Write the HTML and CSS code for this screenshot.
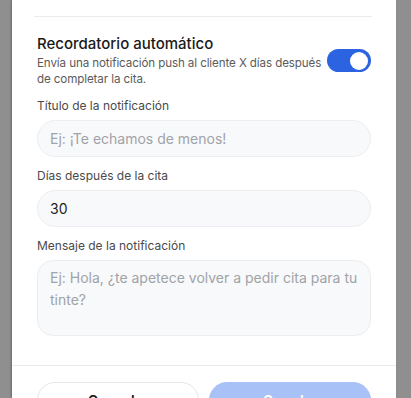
FILE: index.html
```html
<!DOCTYPE html>
<html lang="es">
<head>
<meta charset="utf-8">
<link rel="stylesheet" href="styles.css">
</head>
<body>
<div class="modal">
  <div class="body">
    <hr class="divider">
    <div class="toggle-row">
      <div class="toggle-text">
        <div class="toggle-title">Recordatorio automático</div>
        <div class="toggle-desc">Envía una notificación push al cliente X días después de completar la cita.</div>
      </div>
      <div class="switch"><span class="knob"></span></div>
    </div>
    <label class="field">
      <span class="label">Título de la notificación</span>
      <span class="input placeholder">Ej: ¡Te echamos de menos!</span>
    </label>
    <label class="field">
      <span class="label">Días después de la cita</span>
      <span class="input">30</span>
    </label>
    <label class="field">
      <span class="label">Mensaje de la notificación</span>
      <span class="input textarea placeholder">Ej: Hola, ¿te apetece volver a pedir cita para tu tinte?</span>
    </label>
  </div>
  <div class="footer">
    <button class="btn btn-cancel">Cancelar</button>
    <button class="btn btn-save">Guardar</button>
  </div>
</div>
</body>
</html>
```
FILE: styles.css
```css
html, body {
  margin: 0;
  padding: 0;
  height: 398px;
  overflow: hidden;
}
body {
  background: #8f8f8f;
  font-family: Inter, "Noto Sans", sans-serif;
  color: #1a1a1a;
}
.modal {
  margin-left: 12px;
  width: 384px;
  height: 398px;
  background: #fff;
  box-shadow: -1px 0 2px rgba(0,0,0,0.25);
  display: flex;
  flex-direction: column;
}
.body {
  padding: 16px 25px 0 25px;
  display: flex;
  flex-direction: column;
}
.divider {
  margin: 0 -1px 0 -3px;
  border: 0;
  height: 1px;
  background: #ebebeb;
}
.toggle-row {
  margin-top: 17px;
  display: flex;
  align-items: center;
  gap: 4px;
}
.toggle-text {
  flex: 1;
}
.toggle-title {
  font-size: 15px;
  line-height: 20px;
  font-weight: 500;
  color: #1a1a1a;
}
.toggle-desc {
  margin-top: 1px;
  font-size: 11.6px;
  line-height: 16px;
  color: #5b5b5b;
  letter-spacing: -0.1px;
}
.switch {
  width: 44px;
  height: 23px;
  border-radius: 12px;
  background: #2b63e0;
  display: flex;
  align-items: center;
  justify-content: flex-end;
  padding-right: 3px;
  box-sizing: border-box;
  flex-shrink: 0;
}
.knob {
  width: 18px;
  height: 18px;
  border-radius: 50%;
  background: #fff;
}
.field {
  display: flex;
  flex-direction: column;
  margin-top: 11px;
}
.label {
  font-size: 12px;
  line-height: 16px;
  color: #4a4a4a;
}
.input {
  margin-top: 6px;
  height: 37px;
  box-sizing: border-box;
  border: 1px solid #ebedf0;
  background: #f8f9fa;
  border-radius: 19px;
  padding: 0 12px;
  display: flex;
  align-items: center;
  font-size: 14px;
  color: #1f1f1f;
}
.placeholder {
  color: #a0a3a8;
}
.textarea {
  height: 76px;
  align-items: flex-start;
  padding-top: 6px;
  line-height: 22px;
  border-radius: 16px;
}
.footer {
  margin-top: 29px;
  border-top: 1px solid #ebebeb;
  padding: 16px 25px 0 25px;
  display: flex;
  gap: 10px;
}
.btn {
  flex: 1;
  height: 36px;
  border-radius: 20px;
  font-family: Inter, "Noto Sans", sans-serif;
  font-size: 14px;
  font-weight: 600;
  padding: 0;
}
.btn-cancel {
  background: #fff;
  border: 1px solid #e4e6ea;
  color: #1a1a1a;
}
.btn-save {
  background: #a8c1f7;
  border: 1px solid #a8c1f7;
  color: #fff;
}
```
